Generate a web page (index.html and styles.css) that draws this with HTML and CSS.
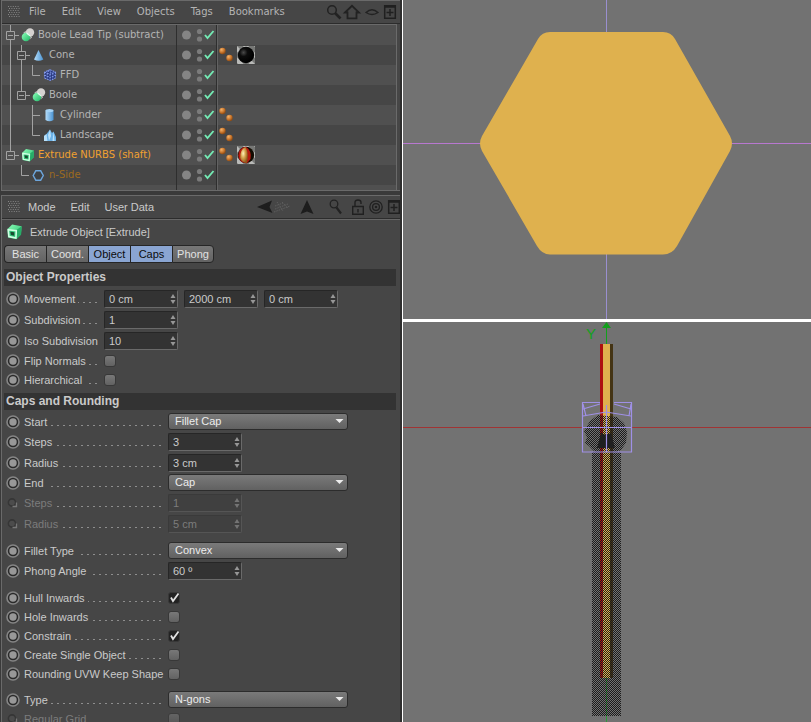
FILE: index.html
```html
<!DOCTYPE html>
<html lang="en">
<head>
<meta charset="utf-8">
<title>Extrude Object</title>
<link rel="stylesheet" href="styles.css">
</head>
<body>
<svg class="defs" aria-hidden="true">
  <defs>
    <linearGradient id="gGreen" x1="0" y1="0" x2="1" y2="1"><stop offset="0" stop-color="#8dffb9"/><stop offset="1" stop-color="#1fb566"/></linearGradient>
    <linearGradient id="gBlue" x1="0" y1="0" x2="1" y2="0"><stop offset="0" stop-color="#b6defa"/><stop offset="1" stop-color="#4a93d2"/></linearGradient>
    <radialGradient id="gOrange" cx=".35" cy=".3" r=".7"><stop offset="0" stop-color="#f3b26a"/><stop offset=".6" stop-color="#c9762c"/><stop offset="1" stop-color="#8d4a12"/></radialGradient>
    <radialGradient id="gBlack" cx=".35" cy=".35" r=".6"><stop offset="0" stop-color="#4a4a4a"/><stop offset=".4" stop-color="#0c0c0c"/><stop offset="1" stop-color="#000"/></radialGradient>
    <radialGradient id="gGold" cx=".4" cy=".4" r=".6"><stop offset="0" stop-color="#fff3bc"/><stop offset=".5" stop-color="#d3a04a"/><stop offset="1" stop-color="#8a5a1c"/></radialGradient>
    <pattern id="pStripe" width="8" height="8" patternUnits="userSpaceOnUse" patternTransform="rotate(-45)"><rect width="8" height="8" fill="#b9bab8"/><rect width="4" height="8" fill="#777876"/></pattern>
  </defs>
  <symbol id="t-line" viewBox="0 0 11 20"><path d="M5.500 0V20" class="tree"/></symbol>
  <symbol id="t-mid" viewBox="0 0 11 20"><path d="M5.500 0V20M5.500 10.500H13" class="tree"/></symbol>
  <symbol id="t-end" viewBox="0 0 11 20"><path d="M5.500 0V10.500H13" class="tree"/></symbol>
  <symbol id="t-box" viewBox="0 0 11 20"><path d="M5.500 0V6M5.500 14V20M10 10.500H14M1.500 6.500H9.500V14.500H1.500ZM3 10.500H8" class="tree"/></symbol>
  <symbol id="t-boxend" viewBox="0 0 11 20"><path d="M5.500 0V6M10 10.500H14M1.500 6.500H9.500V14.500H1.500ZM3 10.500H8" class="tree"/></symbol>
  <symbol id="i-boole" viewBox="0 0 16 16"><circle cx="10" cy="5.500" r="4.200" fill="#d5d2d0"/><circle cx="6" cy="10" r="4.300" fill="url(#gGreen)"/><path d="M3 6.300A5 5 0 0 1 10.200 12.500L12 10Q6 8 5.500 4Z" fill="#fff" opacity=".85"/></symbol>
  <symbol id="i-cone" viewBox="0 0 16 16"><path d="M7.500 3L12.300 12.500Q7.500 15 3 12.500Z" fill="url(#gBlue)"/></symbol>
  <symbol id="i-ffd" viewBox="0 0 16 16"><path d="M2.500 5L8 2.500L13.500 5V11L8 13.800L2.500 11Z" fill="#26367c"/><path d="M2.500 5L8 7.300L13.500 5M2.500 8L8 10.500L13.500 8M2.500 11L8 13.500L13.500 11M8 7V14M5.200 6V12.500M10.800 6V12.500M2.500 5V11M13.500 5V11M5.200 3.800L10.800 6.200M8 2.800L2.500 5M8 2.800L13.500 5" fill="none" stroke="#8298e6" stroke-width="1.100" stroke-dasharray="1.800 .9"/></symbol>
  <symbol id="i-cyl" viewBox="0 0 16 16"><path d="M3.500 3.500V13Q7.500 15.500 11.500 13V3.500Z" fill="url(#gBlue)"/><ellipse cx="7.500" cy="3.600" rx="4" ry="1.600" fill="#a5d3f5"/></symbol>
  <symbol id="i-land" viewBox="0 0 16 16"><path d="M2 14V9L4.500 7L8 2.500L10 6L11.500 4.500L14 10V14Z" fill="#6bb2e8"/><path d="M4.500 7L5.500 14H2V9ZM8 2.500L9 9L7 14L6 8ZM11.500 4.500L12.500 14H10.500Z" fill="#b8e0fa"/></symbol>
  <symbol id="i-ext" viewBox="0 0 16 16"><path d="M2 6L6 2L14 3.500L13.500 10.500L9.500 14.500L2.500 13Z" fill="url(#gGreen)"/><path d="M10 6.500L14 3.500L13.500 10.500L9.500 14.500Z" fill="#27ad68"/><path d="M2.800 6.500L9.500 7.300L9.200 13.500L3.300 12.300Z" fill="#35c97c" stroke="#d2ffe4" stroke-width="1.300"/><path d="M4.500 8.300L7.800 8.700V11.500L5 11Z" fill="#184b30"/></symbol>
  <symbol id="i-hex" viewBox="0 0 16 16"><path d="M4.800 3.800H9.700L12.300 8.500L9.700 13.200H4.800L2.200 8.500Z" fill="#303a44" fill-opacity=".4" stroke="#6da6dc" stroke-width="1.400"/></symbol>
  <symbol id="i-state" viewBox="0 0 40 20"><circle cx="9.500" cy="10" r="4.500" fill="#858585"/><circle cx="22.500" cy="6.500" r="2.600" fill="#7b7b7b"/><circle cx="22.500" cy="14" r="2.600" fill="#7b7b7b"/><path d="M28 10L30.500 13L36.500 6" fill="none" stroke="#74eab4" stroke-width="1.900"/></symbol>
  <symbol id="i-phong" viewBox="0 0 19 20"><circle cx="4.500" cy="6" r="3.200" fill="url(#gOrange)"/><circle cx="11.500" cy="13" r="3.200" fill="url(#gOrange)"/></symbol>
  <symbol id="i-mat1" viewBox="0 0 18 18"><rect width="18" height="18" fill="url(#pStripe)"/><circle cx="9" cy="9" r="8.200" fill="url(#gBlack)"/></symbol>
  <symbol id="i-mat2" viewBox="0 0 18 18"><rect width="18" height="18" fill="url(#pStripe)"/><circle cx="9" cy="9" r="8.200" fill="#120c02"/><path d="M9 .8Q15 5 13.500 13L10 17.200A8.200 8.200 0 0 1 9 .8Z" fill="#b81a10"/><path d="M8.500 .9Q12.500 8 9.500 17.200Q5 16.500 3.200 12Q2.500 4 8.500 .9Z" fill="url(#gGold)"/></symbol>
  <symbol id="i-grip" viewBox="0 0 12 12"><path d="M0 .5H12M1 2.500H12M0 4.500H12M1 6.500H12M0 8.500H12M1 10.500H12" stroke="#858585" stroke-dasharray="1 1.400"/></symbol>
  <symbol id="i-key" viewBox="0 0 14 14"><circle cx="7" cy="7" r="6" fill="#2a2a2a" stroke="#858585" stroke-width="1.600"/><circle cx="7" cy="7" r="3.700" fill="#989898"/></symbol>
  <symbol id="i-keyoff" viewBox="0 0 14 14"><circle cx="6" cy="6.500" r="3.600" fill="#4c4c4c" stroke="#363636" stroke-width="1.600"/><path d="M10.500 6.500V10.500H6.500" fill="none" stroke="#777" stroke-width="1.300"/></symbol>
  <symbol id="i-spin" viewBox="0 0 6 10"><path d="M3 0L5.500 4H.5ZM3 10L.5 6H5.500Z" fill="#979797"/></symbol>
  <symbol id="i-down" viewBox="0 0 9 5"><path d="M.5 0H8.500L4.500 4Z" fill="#ededed"/></symbol>
  <symbol id="i-tick" viewBox="0 0 12 12"><path d="M3 5.500L5 9L10.500 1.500" fill="none" stroke="#e0e0e0" stroke-width="1.800"/></symbol>
  <symbol id="i-mag" viewBox="0 0 16 16"><circle cx="6" cy="6" r="4.300" fill="none" stroke="#222" stroke-width="1.500"/><path d="M9 9L14.500 14.500" stroke="#222" stroke-width="2.600"/></symbol>
  <symbol id="i-home" viewBox="0 0 16 16"><path d="M1 8.500L8 1.800L15 8.500H12.500V14.300H3.500V8.500Z" fill="none" stroke="#222" stroke-width="1.800"/></symbol>
  <symbol id="i-eye" viewBox="0 0 14 14"><path d="M1 7.500Q7 2 13 7.500Q7 11.500 1 7.500Z" fill="none" stroke="#222" stroke-width="1.300"/></symbol>
  <symbol id="i-plus" viewBox="0 0 12 14"><path d="M.7 .7H11.300V13.300H.7ZM1 2H11M6 4V11M2.500 7.500H9.500" fill="none" stroke="#202020" stroke-width="1.500"/></symbol>
  <symbol id="i-back" viewBox="0 0 34 16"><path d="M0 8L15 1.500L12.500 8L15.500 14Z" fill="#1d1d1d"/><path d="M17 13L33 7M18 10L31 5M18 7L26 4M20 3L26 12M25 3L31 9" stroke="#5e5e5e" fill="none" stroke-dasharray="1.500 1"/></symbol>
  <symbol id="i-up" viewBox="0 0 14 16"><path d="M7 1L13.500 15L7 12.500L.5 15Z" fill="#1d1d1d"/></symbol>
  <symbol id="i-find" viewBox="0 0 14 16"><circle cx="5" cy="5" r="3.800" fill="none" stroke="#222" stroke-width="1.300"/><path d="M7.500 8.500L12 14.500" stroke="#222" stroke-width="2.200"/></symbol>
  <symbol id="i-lock" viewBox="0 0 12 16"><path d="M.7 7.500H11.300V15.200H.7ZM3 7V3.500Q3 1 6 1T9 3.500V5M6 10V13.500" fill="none" stroke="#202020" stroke-width="1.400"/></symbol>
  <symbol id="i-target" viewBox="0 0 14 14"><circle cx="7" cy="7" r="6.200" fill="none" stroke="#202020" stroke-width="1.300"/><circle cx="7" cy="7" r="3.400" fill="none" stroke="#202020" stroke-width="1.300"/><circle cx="7" cy="7" r="1.300" fill="#202020"/></symbol>
</svg>

<div class="app">
  <div class="side">
    <section class="panel objects">
      <nav class="menubar lucida">
        <svg class="grip"><use href="#i-grip"/></svg>
        <button>File</button><button>Edit</button><button>View</button><button>Objects</button><button>Tags</button><button>Bookmarks</button>
        <span class="tools">
          <svg class="w16"><use href="#i-mag"/></svg><svg class="w16"><use href="#i-home"/></svg><svg class="w14 lead"><use href="#i-eye"/></svg><svg class="w12 lead"><use href="#i-plus"/></svg>
        </span>
      </nav>
      <div class="tree-list lucida">
        <div class="row"><span class="name"><svg class="t"><use href="#t-box"/></svg><svg class="ico"><use href="#i-boole"/></svg>Boole Lead Tip (subtract)</span><span class="state"><svg><use href="#i-state"/></svg></span><span class="tags"></span></div>
        <div class="row"><span class="name"><svg class="t"><use href="#t-line"/></svg><svg class="t"><use href="#t-box"/></svg><svg class="ico"><use href="#i-cone"/></svg>Cone</span><span class="state"><svg><use href="#i-state"/></svg></span><span class="tags"><svg class="phong"><use href="#i-phong"/></svg><svg class="mat"><use href="#i-mat1"/></svg></span></div>
        <div class="row"><span class="name"><svg class="t"><use href="#t-line"/></svg><svg class="t"><use href="#t-line"/></svg><svg class="t"><use href="#t-end"/></svg><svg class="ico"><use href="#i-ffd"/></svg>FFD</span><span class="state"><svg><use href="#i-state"/></svg></span><span class="tags"></span></div>
        <div class="row"><span class="name"><svg class="t"><use href="#t-line"/></svg><svg class="t"><use href="#t-boxend"/></svg><svg class="ico"><use href="#i-boole"/></svg>Boole</span><span class="state"><svg><use href="#i-state"/></svg></span><span class="tags"></span></div>
        <div class="row"><span class="name"><svg class="t"><use href="#t-line"/></svg><svg class="t"></svg><svg class="t"><use href="#t-mid"/></svg><svg class="ico"><use href="#i-cyl"/></svg>Cylinder</span><span class="state"><svg><use href="#i-state"/></svg></span><span class="tags"><svg class="phong"><use href="#i-phong"/></svg></span></div>
        <div class="row"><span class="name"><svg class="t"><use href="#t-line"/></svg><svg class="t"></svg><svg class="t"><use href="#t-end"/></svg><svg class="ico"><use href="#i-land"/></svg>Landscape</span><span class="state"><svg><use href="#i-state"/></svg></span><span class="tags"><svg class="phong"><use href="#i-phong"/></svg></span></div>
        <div class="row"><span class="name selected"><svg class="t"><use href="#t-boxend"/></svg><svg class="ico"><use href="#i-ext"/></svg>Extrude NURBS (shaft)</span><span class="state"><svg><use href="#i-state"/></svg></span><span class="tags"><svg class="phong"><use href="#i-phong"/></svg><svg class="mat"><use href="#i-mat2"/></svg></span></div>
        <div class="row"><span class="name child"><svg class="t"></svg><svg class="t"><use href="#t-end"/></svg><svg class="ico"><use href="#i-hex"/></svg>n-Side</span><span class="state"><svg><use href="#i-state"/></svg></span><span class="tags"></span></div>
        <div class="row rest"><span class="name"></span><span class="state"></span><span class="tags"></span></div>
      </div>
    </section>

    <section class="panel attributes">
      <nav class="menubar">
        <svg class="grip"><use href="#i-grip"/></svg>
        <button>Mode</button><button>Edit</button><button>User Data</button>
        <span class="tools low">
          <svg class="w34"><use href="#i-back"/></svg><svg class="w14 up"><use href="#i-up"/></svg><svg class="w14 find"><use href="#i-find"/></svg><svg class="w12 lock"><use href="#i-lock"/></svg><svg class="w14"><use href="#i-target"/></svg><svg class="w12"><use href="#i-plus"/></svg>
        </span>
      </nav>
      <h1><svg class="ico"><use href="#i-ext"/></svg>Extrude Object [Extrude]</h1>
      <div class="tabs"><button>Basic</button><button>Coord.</button><button class="on">Object</button><button class="on">Caps</button><button>Phong</button></div>

      <h2>Object Properties</h2>
      <div class="props narrow">
        <div class="prop"><span class="cap"><button class="key" aria-label="Key"><svg><use href="#i-key"/></svg></button><label for="mx">Movement</label><i></i></span><span class="field"><input id="mx" value="0 cm"><svg><use href="#i-spin"/></svg></span><span class="field"><input aria-label="Y" value="2000 cm"><svg><use href="#i-spin"/></svg></span><span class="field"><input aria-label="Z" value="0 cm"><svg><use href="#i-spin"/></svg></span></div>
        <div class="prop"><span class="cap"><button class="key" aria-label="Key"><svg><use href="#i-key"/></svg></button><label for="sub">Subdivision</label><i></i></span><span class="field"><input id="sub" value="1"><svg><use href="#i-spin"/></svg></span></div>
        <div class="prop"><span class="cap"><button class="key" aria-label="Key"><svg><use href="#i-key"/></svg></button><label for="iso">Iso Subdivision</label></span><span class="field"><input id="iso" value="10"><svg><use href="#i-spin"/></svg></span></div>
        <div class="prop short"><span class="cap"><button class="key" aria-label="Key"><svg><use href="#i-key"/></svg></button><label for="flip">Flip Normals</label><i></i></span><span class="check"><input type="checkbox" id="flip"></span></div>
        <div class="prop short"><span class="cap"><button class="key" aria-label="Key"><svg><use href="#i-key"/></svg></button><label for="hier">Hierarchical</label><i></i></span><span class="check"><input type="checkbox" id="hier"></span></div>
      </div>

      <h2>Caps and Rounding</h2>
      <div class="props wide">
        <div class="prop short"><span class="cap"><button class="key" aria-label="Key"><svg><use href="#i-key"/></svg></button><label for="start">Start</label><i></i></span><span class="pick"><select id="start"><option>Fillet Cap</option></select><svg><use href="#i-down"/></svg></span></div>
        <div class="prop"><span class="cap"><button class="key" aria-label="Key"><svg><use href="#i-key"/></svg></button><label for="st1">Steps</label><i></i></span><span class="field"><input id="st1" value="3"><svg><use href="#i-spin"/></svg></span></div>
        <div class="prop"><span class="cap"><button class="key" aria-label="Key"><svg><use href="#i-key"/></svg></button><label for="ra1">Radius</label><i></i></span><span class="field"><input id="ra1" value="3 cm"><svg><use href="#i-spin"/></svg></span></div>
        <div class="prop short"><span class="cap"><button class="key" aria-label="Key"><svg><use href="#i-key"/></svg></button><label for="end">End</label><i></i></span><span class="pick"><select id="end"><option>Cap</option></select><svg><use href="#i-down"/></svg></span></div>
        <div class="prop off"><span class="cap"><button class="key" aria-label="Key" disabled><svg><use href="#i-keyoff"/></svg></button><label for="st2">Steps</label><i></i></span><span class="field"><input id="st2" value="1" disabled><svg><use href="#i-spin"/></svg></span></div>
        <div class="prop off"><span class="cap"><button class="key" aria-label="Key" disabled><svg><use href="#i-keyoff"/></svg></button><label for="ra2">Radius</label><i></i></span><span class="field"><input id="ra2" value="5 cm" disabled><svg><use href="#i-spin"/></svg></span></div>
        <div class="prop short group"><span class="cap"><button class="key" aria-label="Key"><svg><use href="#i-key"/></svg></button><label for="ft">Fillet Type</label><i></i></span><span class="pick"><select id="ft"><option>Convex</option></select><svg><use href="#i-down"/></svg></span></div>
        <div class="prop"><span class="cap"><button class="key" aria-label="Key"><svg><use href="#i-key"/></svg></button><label for="pa">Phong Angle</label><i></i></span><span class="field"><input id="pa" value="60 º"><svg><use href="#i-spin"/></svg></span></div>
        <div class="prop short group"><span class="cap"><button class="key" aria-label="Key"><svg><use href="#i-key"/></svg></button><label for="hu">Hull Inwards</label><i></i></span><span class="check"><input type="checkbox" id="hu" checked><svg><use href="#i-tick"/></svg></span></div>
        <div class="prop short"><span class="cap"><button class="key" aria-label="Key"><svg><use href="#i-key"/></svg></button><label for="ho">Hole Inwards</label><i></i></span><span class="check"><input type="checkbox" id="ho"></span></div>
        <div class="prop short"><span class="cap"><button class="key" aria-label="Key"><svg><use href="#i-key"/></svg></button><label for="co">Constrain</label><i></i></span><span class="check"><input type="checkbox" id="co" checked><svg><use href="#i-tick"/></svg></span></div>
        <div class="prop short"><span class="cap"><button class="key" aria-label="Key"><svg><use href="#i-key"/></svg></button><label for="cs">Create Single Object</label><i></i></span><span class="check"><input type="checkbox" id="cs"></span></div>
        <div class="prop short"><span class="cap"><button class="key" aria-label="Key"><svg><use href="#i-key"/></svg></button><label for="uv">Rounding UVW Keep Shape</label></span><span class="check"><input type="checkbox" id="uv"></span></div>
        <div class="prop short group"><span class="cap"><button class="key" aria-label="Key"><svg><use href="#i-key"/></svg></button><label for="ty">Type</label><i></i></span><span class="pick"><select id="ty"><option>N-gons</option></select><svg><use href="#i-down"/></svg></span></div>
        <div class="prop short off"><span class="cap"><button class="key" aria-label="Key" disabled><svg><use href="#i-keyoff"/></svg></button><label for="rg">Regular Grid</label></span><span class="check"><input type="checkbox" id="rg" disabled></span></div>
      </div>
    </section>
  </div>

  <main class="views">
    <svg class="view" viewBox="0 0 408 319" preserveAspectRatio="xMidYMid slice">
      <rect x="203" width="1" height="319" fill="#9a8fd0"/>
      <rect x="-400" y="143" width="1200" height="1" fill="#b878d0"/>
      <path d="M147 32H260Q268 32 272 39L327 136Q331 143.500 327 151L274 246Q269 254.500 260 254.500H147Q139 254.500 134 246L79 151Q75 143.500 79 136L135 39Q139 32 147 32Z" fill="#dfb14e"/>
    </svg>
    <svg class="view" viewBox="0 0 408 400" preserveAspectRatio="xMidYMid slice">
      <defs><pattern id="dither" width="2" height="2" patternUnits="userSpaceOnUse" shape-rendering="crispEdges"><rect width="1" height="1" fill="#1c1c1c"/><rect x="1" y="1" width="1" height="1" fill="#1c1c1c"/></pattern></defs>
      <rect x="-400" y="105" width="1200" height="1" fill="#a03434"/>
      <rect x="203" y="5" width="1" height="17" fill="#12a01c"/>
      <rect x="203" y="356" width="1" height="44" fill="#2f9a3a"/>
      <path d="M203.500 0L208 6H199Z" fill="#12a01c"/>
      <text x="183" y="17" class="axis">Y</text>
      <g shape-rendering="crispEdges">
        <rect x="197" y="22" width="3" height="334" fill="#ad1010"/>
        <rect x="200" y="22" width="7" height="334" fill="#dfb14e"/>
        <rect x="207" y="22" width="3" height="334" fill="#443414"/>
        <rect x="189" y="130" width="29" height="264" fill="url(#dither)"/>
      </g>
      <path d="M195 93L214 95L221 101L224 110L223 121L218 128L213 130H192L186 124L182 121L184 115L181 109L187 99Z" fill="url(#dither)"/>
      <path d="M198 111L203 113L208 111L212 126H194Z" fill="#202020"/>
      <path d="M197 80.500H179.500V130H228.500V80.500H211M180 87L197 82M211 82L228 87M180 94L203 90L228 94M180 82L183 94M228 82L226 94M203.500 83V130M180 105.500H228" fill="none" stroke="#9f90e6" stroke-width="1.200"/>
    </svg>
  </main>
</div>
</body>
</html>
```
FILE: styles.css
```css
* { box-sizing: border-box; }

body {
  margin: 0;
  height: 100vh;
  overflow: hidden;
  background: #3a3a3a;
  color: #cacaca;
  font: 11px/16px "Liberation Sans", Arial, sans-serif;
}

button, input, select { font: inherit; color: inherit; }
button { border: 0; padding: 0; background: none; }
svg { flex: none; display: block; overflow: visible; }
symbol { overflow: visible; }
.defs { position: absolute; width: 0; height: 0; }
.tree { fill: none; stroke: #a2a2a2; }
.lucida { font-family: "DejaVu Sans", sans-serif; font-size: 10px; color: #b4b4b4; }

.app {
  display: grid;
  grid-template-columns: 402px 1fr;
  height: 100%;
}
.side {
  display: flex;
  flex-direction: column;
  min-height: 0;
  overflow: hidden;
  border-right: 2px solid #2e2e2e;
}
.panel {
  flex: none;
  margin-left: 1px;
  border: 1px solid #6a6a6a;
  border-right: 0;
  background: #464646;
}
.objects { margin-bottom: 4px; }

.menubar {
  display: flex;
  align-items: center;
  gap: 15px;
  height: 23px;
  padding-left: 6px;
  border-bottom: 1px solid #2c2c2c;
}
.objects .menubar { gap: 16px; }
.attributes .menubar { padding-bottom: 1px; }
.grip { width: 12px; height: 12px; margin-right: -7px; }
.tools { display: flex; align-items: center; gap: 2px; margin-left: auto; padding-right: 4px; }
.tools svg { height: 16px; }
.lead { margin-left: 3px; }
.tools.low { gap: 5px; padding-right: 0; }
.up, .lock { margin-left: 4px; }
.find { margin-left: 10px; }
.w12 { width: 12px; }
.w14 { width: 14px; }
.w16 { width: 16px; }
.w34 { width: 34px; }

.tree-list {
  margin-right: 3px;
  border-top: 1px solid #6a6a6a;
  border-right: 1px solid #6a6a6a;
}
.row {
  display: grid;
  grid-template: 20px / 175px 40px 1fr;
  background: #464646;
}
.row:nth-child(odd) { background: #505050; }
.row.rest { grid-template-rows: 5px; }
.name {
  display: flex;
  align-items: center;
  padding-left: 3px;
  border-right: 1px solid #2e2e2e;
  white-space: nowrap;
}
.selected { color: #f0a030; }
.child { color: #9c6a20; }
.t { width: 11px; height: 20px; }
.ico { width: 16px; height: 16px; margin: 0 2px 0 4px; }
.state { border-right: 1px solid #2e2e2e; }
.state svg { width: 40px; height: 20px; }
.tags { display: flex; align-items: center; border-left: 1px solid #626262; }
.phong { width: 19px; height: 20px; }
.mat { width: 18px; height: 18px; }

h1, h2 { margin: 0; }
h1 {
  display: flex;
  align-items: center;
  height: 26px;
  padding-bottom: 2px;
  border-top: 1px solid #666;
  font-size: 11px;
  font-weight: normal;
}
h1 .ico { width: 19px; height: 19px; margin: 0 6px 0 3px; }
h2 {
  margin: 6px 4px 0 2px;
  padding-left: 2px;
  background: #333;
  font-size: 12px;
  line-height: 17px;
}
.narrow + h2 { margin-top: 4px; }

.tabs { display: flex; margin-left: 2px; }
.tabs button {
  width: 42px;
  height: 18px;
  border: 1px solid #262626;
  border-right-width: 0;
  background: linear-gradient(#777, #636363);
  color: #e2e2e2;
}
.tabs button:first-child { border-radius: 4px 0 0 4px; }
.tabs button:last-child { border-right-width: 1px; border-radius: 0 4px 4px 0; }
.tabs button.on { background: #8aa5d2; color: #0c0c0c; }

.props { padding: 2px 0 0 4px; }
.prop { display: flex; align-items: center; height: 21px; }
.prop.short { height: 19px; }
.prop.group { margin-top: 7px; }
.cap { display: flex; align-items: center; flex: none; width: 162px; white-space: nowrap; }
.narrow .cap { width: 98px; }
.cap i {
  flex: 1;
  height: 1px;
  margin: 7px 7px 0 3px;
  background: repeating-linear-gradient(to left, #8e8e8e 0 2px, transparent 2px 6px);
}
.key { flex: none; width: 14px; height: 14px; margin-right: 4px; }
.key svg { width: 14px; height: 14px; }

.field { position: relative; flex: none; width: 74px; height: 18px; }
.field + .field { margin-left: 6px; }
.field input {
  display: block;
  width: 100%;
  height: 100%;
  padding: 0 4px;
  border: 1px solid #262626;
  border-right-color: #6a6a6a;
  border-bottom-color: #6a6a6a;
  border-radius: 2px;
  background: #333;
}
.field svg { position: absolute; right: 2px; top: 4px; width: 6px; height: 10px; }
.pick { position: relative; flex: none; width: 180px; height: 17px; }
.pick select {
  appearance: none;
  display: block;
  width: 100%;
  height: 100%;
  padding: 0 6px;
  border: 1px solid #2c2c2c;
  border-radius: 3px;
  background: linear-gradient(#7a7a7a, #616161);
  color: #ececec;
  line-height: 15px;
}
.pick svg { position: absolute; right: 4px; top: 6px; width: 9px; height: 5px; }

.check { position: relative; flex: none; width: 12px; height: 12px; }
.check input {
  appearance: none;
  display: block;
  width: 12px;
  height: 12px;
  margin: 0;
  border: 1px solid #383838;
  border-radius: 3px;
  background: linear-gradient(#787878, #626262);
}
.check input:checked { background: #222; }
.check svg { position: absolute; top: 0; left: 0; width: 12px; height: 12px; pointer-events: none; }
.check input:not(:checked) + svg { display: none; }

.off { color: #7c7c7c; }
.off .field input { background: #404040; border-color: #3a3a3a #555 #555 #3a3a3a; }
.off .field svg { opacity: .6; }
.off .check { opacity: .6; }

.views {
  display: grid;
  grid-template-rows: 319fr 400fr;
  gap: 3px;
  padding-left: 1px;
  min-height: 0;
  background: #fff;
}
.view { width: 100%; height: 100%; min-height: 0; overflow: hidden; background: #727272; }
.axis { font: 15px "Liberation Sans", Arial, sans-serif; fill: #12a01c; }
```
